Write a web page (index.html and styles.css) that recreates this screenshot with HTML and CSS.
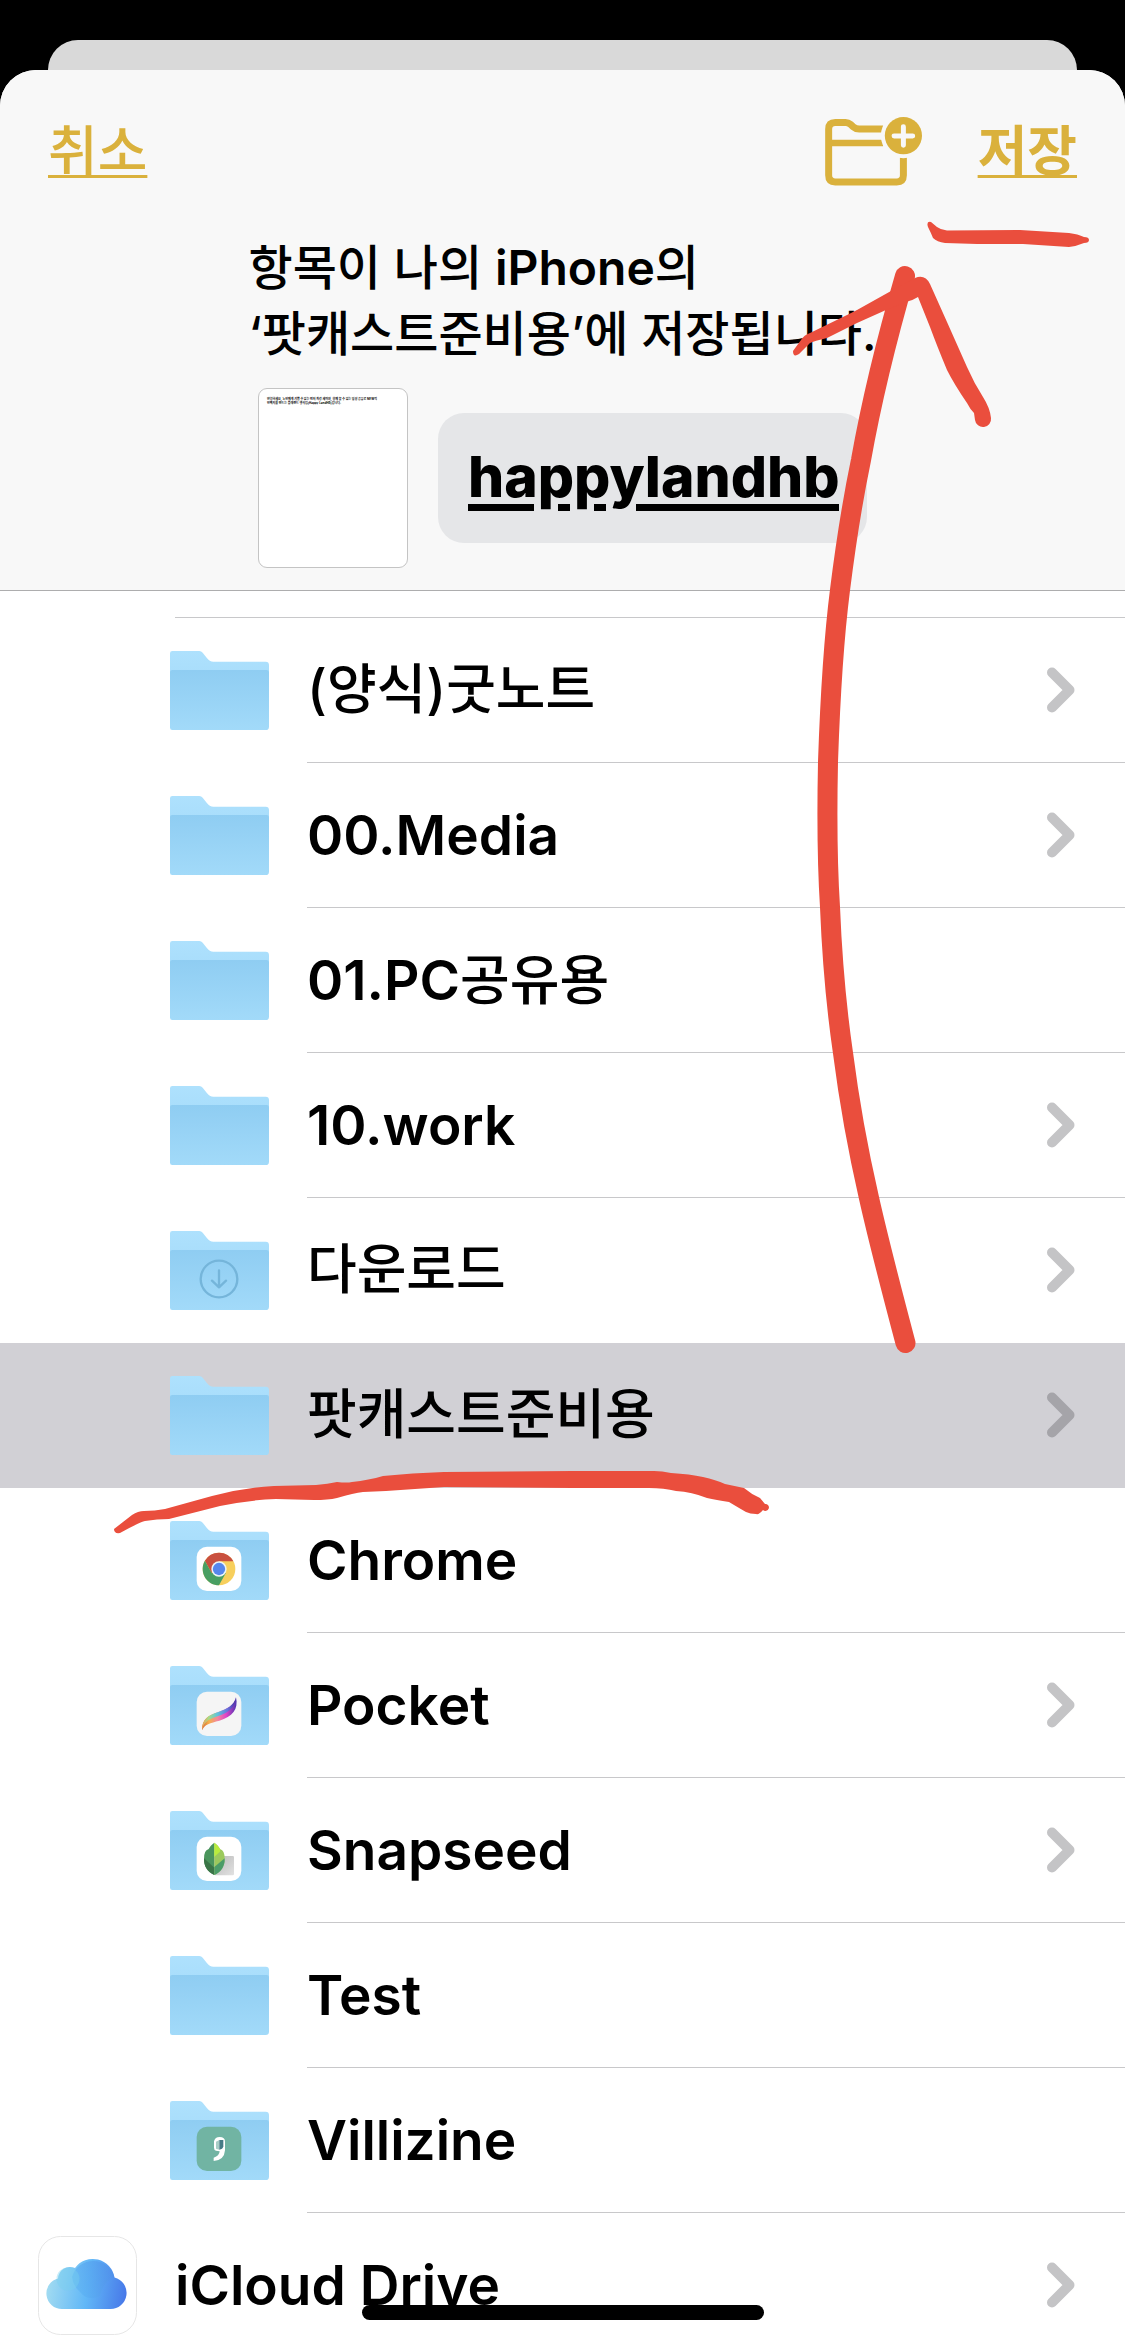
FILE: index.html
```html
<!DOCTYPE html>
<html lang="ko">
<head>
<meta charset="utf-8">
<meta name="viewport" content="width=device-width, initial-scale=1">
<title>파일에 저장</title>
<link rel="stylesheet" href="styles.css">
</head>
<body>
<svg class="defs" aria-hidden="true">
  <defs>
    <linearGradient id="back" x1="0" y1="0" x2="0" y2="1"><stop offset="0" stop-color="#aee1fd"/><stop offset="1" stop-color="#a5dbfa"/></linearGradient>
    <linearGradient id="front" x1="0" y1="0" x2="0" y2="1"><stop offset="0" stop-color="#8fcdf2"/><stop offset="1" stop-color="#a2daf9"/></linearGradient>
    <linearGradient id="feather-low" x1="0" y1="0" x2="1" y2="0"><stop offset="0" stop-color="#d9663a"/><stop offset=".2" stop-color="#f5b04a"/><stop offset=".45" stop-color="#f2879d"/><stop offset=".7" stop-color="#e043c8"/><stop offset="1" stop-color="#4a35b0"/></linearGradient>
    <linearGradient id="feather-high" x1="0" y1="0" x2="1" y2="0"><stop offset="0" stop-color="#f0a050"/><stop offset=".2" stop-color="#a5dc8a"/><stop offset=".45" stop-color="#5fc4dc"/><stop offset=".75" stop-color="#6a72dc"/><stop offset="1" stop-color="#43309e"/></linearGradient>
    <linearGradient id="shade" x1="0" y1="0" x2="1" y2="1"><stop offset="0" stop-color="#b8b8b8"/><stop offset="1" stop-color="#e2e2e2"/></linearGradient>
    <linearGradient id="cloud" gradientUnits="userSpaceOnUse" x1="8" y1="50" x2="90" y2="62"><stop offset="0" stop-color="#a3dcf1"/><stop offset=".5" stop-color="#61b7f7"/><stop offset="1" stop-color="#4675e8"/></linearGradient>
    <linearGradient id="cloud-top" gradientUnits="userSpaceOnUse" x1="34" y1="50" x2="78" y2="34"><stop offset="0" stop-color="#5cb5f4"/><stop offset="1" stop-color="#4f8de8"/></linearGradient>
    <symbol id="folder" viewBox="0 0 297 237">
      <path fill="url(#back)" d="M0 7Q0 0 7 0H88Q94 0 98 5L110 20Q119 32 130 32H287Q297 32 297 42V120H0Z"/>
      <path fill="url(#front)" d="M0 63Q0 57 7 57H290Q297 57 297 64V227Q297 237 287 237H7Q0 237 0 230Z"/>
    </symbol>
    <symbol id="chevron" viewBox="0 0 28 46">
      <path d="M5 5.5L22.500 23L5 40.500" fill="none" stroke="currentColor" stroke-width="10" stroke-linecap="round" stroke-linejoin="round"/>
    </symbol>
  </defs>
</svg>

<div class="screen">
  <div class="rear-sheet"></div>
  <main class="sheet">
    <header class="header">
      <nav class="nav">
        <button class="nav-button" type="button">취소</button>
        <div class="nav-actions">
          <button class="icon-button" type="button" aria-label="새로운 폴더">
            <svg class="new-folder" viewBox="135 169 292 207">
              <path d="M310 205H238Q228 205 220 198L212 191Q205 185 197 185H166Q146 185 146 205V344Q146 364 166 364H351Q371 364 371 344V285" fill="none" stroke="#dab13c" stroke-width="21"/>
              <path d="M150 247H310" stroke="#dab13c" stroke-width="19"/>
              <circle cx="371" cy="225" r="68" fill="#f8f8f8"/>
              <circle cx="371" cy="225" r="56" fill="#dab13c"/>
              <path d="M343 226H399M371 198V254" stroke="#f8f8f8" stroke-width="15" stroke-linecap="round"/>
            </svg>
          </button>
          <button class="nav-button nav-save" type="button">저장</button>
        </div>
      </nav>
      <h1 class="title">항목이 나의 <span class="device">iPhone</span>의<br>‘팟캐스트준비용’에 저장됩니다.</h1>
      <div class="document">
        <div class="thumbnail">
          <p>안녕하세요, 노인에게 기쁨 수 있는 먼저 최강 세미야, 함께 할 수 있는 일상 공유로 NEW적<br>인맥지를 만드는 플레랜드 행사입(Happy LandHB)입니다.</p>
        </div>
        <input class="filename" type="text" value="happylandhb" aria-label="파일 이름" spellcheck="false">
      </div>
    </header>

    <div class="browser">
      <div class="list-edge"></div>
      <ul class="list">
        <li><a class="row" href="#"><svg class="folder"><use href="#folder"/></svg><span class="cell"><span class="name ko">(양식)굿노트</span><svg class="chevron"><use href="#chevron"/></svg></span></a></li>
        <li><a class="row" href="#"><svg class="folder"><use href="#folder"/></svg><span class="cell"><span class="name">00.Media</span><svg class="chevron"><use href="#chevron"/></svg></span></a></li>
        <li><a class="row" href="#"><svg class="folder"><use href="#folder"/></svg><span class="cell"><span class="name">01.PC<span class="ko">공유용</span></span></span></a></li>
        <li><a class="row" href="#"><svg class="folder"><use href="#folder"/></svg><span class="cell"><span class="name">10.work</span><svg class="chevron"><use href="#chevron"/></svg></span></a></li>
        <li><a class="row" href="#"><svg class="folder" viewBox="0 0 297 237"><use href="#folder"/><g fill="none" stroke="#75b5da" stroke-width="7" stroke-linecap="round" stroke-linejoin="round"><circle cx="147" cy="144" r="55"/><path d="M147 118V169M126 149L147 169L168 149"/></g></svg><span class="cell cell-plain"><span class="name ko">다운로드</span><svg class="chevron"><use href="#chevron"/></svg></span></a></li>
        <li><a class="row row-selected" href="#" aria-current="true"><svg class="folder"><use href="#folder"/></svg><span class="cell cell-plain"><span class="name ko">팟캐스트준비용</span><svg class="chevron"><use href="#chevron"/></svg></span></a></li>
        <li><a class="row" href="#"><svg class="folder" viewBox="0 0 297 237"><use href="#folder"/><rect x="80" y="77" width="134" height="133" rx="31" fill="#fff"/>
          <circle cx="147" cy="144" r="49" fill="#f7cf5c"/>
          <path fill="#c9503f" d="M104.600 119.500A49 49 0 0 1 190 121H147L125.500 156.500Z"/>
          <path fill="#489f63" d="M104.600 119.500A49 49 0 0 0 147 193L167.500 156L147 144L125.500 156.500Z"/>
          <circle cx="147" cy="144" r="23" fill="#edf3f5"/><circle cx="147" cy="144" r="18.500" fill="#5686ec"/></svg><span class="cell"><span class="name">Chrome</span></span></a></li>
        <li><a class="row" href="#"><svg class="folder" viewBox="0 0 297 237"><use href="#folder"/><rect x="80" y="77" width="134" height="133" rx="31" fill="#f5f5f5"/>
          <path fill="url(#feather-low)" d="M198 94C193 118 172 129 145 138C114 148 96 160 96 193C103 175 121 171 148 164C187 153 206 130 198 94Z"/>
          <path fill="url(#feather-high)" d="M198 94C193 118 172 129 145 138C114 148 96 160 96 193C102 164 121 158 151 148C178 139 195 123 198 94Z"/></svg><span class="cell"><span class="name">Pocket</span><svg class="chevron"><use href="#chevron"/></svg></span></a></li>
        <li><a class="row" href="#"><svg class="folder" viewBox="0 0 297 237"><use href="#folder"/><rect x="80" y="77" width="134" height="133" rx="31" fill="#fff"/>
          <rect x="133" y="135" width="59" height="58" rx="4" fill="url(#shade)"/>
          <path fill="#4a955d" d="M133 95C125 101 119 107 116 114Q101 118 102 145C102 168 115 183 133 192Z"/>
          <path fill="#3a7547" d="M102 142L133 170V192C112 184 101 166 102 142Z"/>
          <path fill="#9cc95d" d="M133 95C141 101 147 107 150 114Q165 118 164 145C164 168 151 183 133 192Z"/>
          <path fill="#b9ec3e" d="M133 95C141 101 147 107 150 114V122L133 137Z"/>
          <path fill="#4b9c68" d="M164 142L133 168V192C154 184 165 166 164 142Z"/></svg><span class="cell"><span class="name">Snapseed</span><svg class="chevron"><use href="#chevron"/></svg></span></a></li>
        <li><a class="row" href="#"><svg class="folder"><use href="#folder"/></svg><span class="cell"><span class="name">Test</span></span></a></li>
        <li><a class="row" href="#"><svg class="folder" viewBox="0 0 297 237"><use href="#folder"/><rect x="80" y="77" width="134" height="133" rx="31" fill="#71b4a3"/>
          <path fill="#fff" d="M132 121Q135 108 149 108Q165 108 165 122V148Q163 178 131 180V170Q148 165 149 151L138 149Q132 148 132 140Z"/>
          <path fill="#a8cdc6" d="M138 122L148 117V146L138 143Z"/><path fill="#467b86" d="M148 117H160V136Q158 146 148 146Z"/></svg><span class="cell"><span class="name">Villizine</span></span></a></li>
        <li><a class="row row-root" href="#"><svg class="drive" viewBox="0 0 99 99"><rect x=".5" y=".5" width="98" height="98" rx="22" fill="#fff" stroke="#e6e6e6"/>
          <path fill="url(#cloud)" d="M24 73A15.500 15.500 0 0 1 20 42.500A12 12 0 0 1 37 32A22 22 0 0 1 76.500 41.500A16 16 0 0 1 72 73Z"/>
          <path fill="url(#cloud-top)" d="M34 41A22 22 0 0 1 76.500 41.500Q66 44 62 60Q50 66 42 56Q35 50 34 41Z" opacity=".6"/>
          <circle cx="30" cy="43" r="11.500" fill="#79cfee" opacity=".4"/></svg><span class="cell"><span class="name">iCloud Drive</span><svg class="chevron"><use href="#chevron"/></svg></span></a></li>
      </ul>
    </div>
  </main>

  <div class="home-indicator"></div>
  <svg class="ink" viewBox="0 0 1125 2344" aria-hidden="true" fill="#ea4e3d">
    <path d="M928 227Q926 221 931 222L937 227Q941 230 947 230.500L1020 230L1069 233Q1078 234 1084 237Q1089 237 1089 240Q1089 243 1084 243Q1077 246 1069 247L1023 244H977L945 243Q937 242 933 238Q931 233 928 227Z"/>
    <path d="M905.500 1343C888 1277 878 1238 869 1198C858 1150 849 1100 843 1053C836 1005 832 956 830 907C827 860 827 810 828 762C830 703 833 645 840 590C845 550 851 508 861 460Q876 376 905 276" fill="none" stroke="#ea4e3d" stroke-width="20" stroke-linecap="round"/>
    <path d="M793 351L801 340Q804 335 810 333L847 315L857 310L891 291L915 278Q925 274 930 284L947 322L967 367Q974 383 983 397Q990 408 991 418A8 8 0 0 1 975 420L974 413Q970 409 967 403Q954 384 947 370Q937 346 930 327L918 297Q913 300 909 301L886 310L857 323L827 338Q814 341 810 343L799 354Q793 358 793 351Z"/>
    <path d="M114 1529L132 1515Q138 1511 144 1511Q155 1511 165 1509L212 1496Q242 1488 274 1486L316 1485Q328 1484 337 1482Q347 1483 352 1482Q369 1480 383 1476Q412 1473 444 1472L573 1471H654Q662 1471 671 1473Q690 1474 703 1477Q716 1480 725 1484L744 1488Q751 1494 760 1498L765 1504A3.500 3.500 0 1 1 763 1510Q759 1515 756 1514Q750 1514 746 1512Q739 1508 729 1502Q716 1500 707 1498Q692 1492 676 1491Q664 1488 649 1488H573L444 1487L386 1491L363 1492Q354 1493 337 1498Q328 1500 314 1500L276 1499Q249 1500 220 1506L169 1519Q157 1519 145 1521Q140 1522 120 1533Q114 1534 114 1529Z"/>
  </svg>
</div>
</body>
</html>
```
FILE: styles.css
```css
* {
  box-sizing: border-box;
}

body {
  margin: 0;
  background: #000;
  color: #000;
  font-family: Inter, "Noto Sans CJK KR", sans-serif;
}

button,
input {
  margin: 0;
  padding: 0;
  border: 0;
  background: none;
  font: inherit;
}

.defs {
  display: block;
  width: 0;
  height: 0;
}

.screen {
  position: relative;
  display: flex;
  flex-direction: column;
  height: 100vh;
  padding-top: 40px;
  overflow: hidden;
}

.rear-sheet {
  flex: none;
  height: 30px;
  margin: 0 48px;
  border-radius: 30px 30px 0 0;
  background: #d9d9d9;
}

.sheet {
  display: flex;
  flex: 1;
  flex-direction: column;
  min-height: 0;
  overflow: hidden;
  border-radius: 36px 36px 0 0;
  background: #fff;
}

.header {
  display: flex;
  flex: none;
  flex-direction: column;
  align-items: center;
  padding-bottom: 22px;
  border-bottom: 1px solid #adadae;
  background: #f8f8f8;
}

.nav {
  display: flex;
  align-self: stretch;
  align-items: center;
  justify-content: space-between;
  padding: 43px 48px 46px;
}

.nav-actions {
  display: flex;
  align-items: center;
  gap: 56px;
}

.nav-button {
  padding-bottom: 6px;
  color: #dab13c;
  font-family: "Noto Sans CJK KR", sans-serif;
  font-size: 54px;
  font-weight: 500;
  line-height: 70px;
  text-decoration: underline;
  text-decoration-skip-ink: none;
  text-decoration-thickness: 3px;
  text-underline-offset: 4px;
}

.nav-save {
  font-weight: 700;
}

.icon-button {
  color: #dab13c;
}

.new-folder {
  display: block;
  width: 97px;
  height: 69px;
}

.title {
  margin: 0 0 21px;
  font-size: 48px;
  font-weight: 500;
  line-height: 66px;
}

.device {
  font-weight: 600;
}

.document {
  display: flex;
  align-items: center;
  gap: 30px;
}

.thumbnail {
  width: 150px;
  height: 180px;
  padding: 8px;
  overflow: hidden;
  border: 1px solid #c4c4c4;
  border-radius: 9px;
  background: #fff;
}

.thumbnail p {
  margin: 0;
  font-size: 3px;
  font-weight: 700;
  line-height: 4px;
  white-space: nowrap;
}

.filename {
  width: 429px;
  height: 130px;
  padding: 0 28px 4px 30px;
  border-radius: 26px;
  background: #e5e6e8;
  font-size: 57px;
  font-weight: 800;
  text-decoration: underline;
  text-decoration-thickness: 7px;
  text-underline-offset: 7px;
}

.browser {
  flex: 1;
  min-height: 0;
  overflow: hidden;
}

.list-edge {
  height: 27px;
  margin-left: 175px;
  border-bottom: 1px solid #c8c8ca;
}

.list {
  margin: 0;
  padding: 0;
  list-style: none;
}

.row {
  display: flex;
  align-items: center;
  gap: 38px;
  height: 145px;
  padding-left: 170px;
  color: #000;
  text-decoration: none;
}

.row-selected {
  background: #d1d0d5;
}

.row-root {
  padding-left: 38px;
}

.folder {
  flex: none;
  width: 99px;
  height: 79px;
}

.drive {
  flex: none;
  width: 99px;
  height: 99px;
}

.cell {
  display: flex;
  flex: 1;
  align-items: center;
  align-self: stretch;
  justify-content: space-between;
  padding-right: 50px;
  border-bottom: 1px solid #c8c8ca;
}

.cell-plain {
  border-color: transparent;
}

.name {
  font-size: 55px;
  font-weight: 600;
  line-height: 80px;
}

.ko {
  font-size: 54px;
  font-weight: 500;
}

.chevron {
  flex: none;
  width: 28px;
  height: 46px;
  color: #c4c4c6;
}

.row-selected .chevron {
  color: #a5a4a9;
}

.home-indicator {
  position: absolute;
  bottom: 24px;
  left: 50%;
  width: 402px;
  height: 15px;
  margin-left: -201px;
  border-radius: 8px;
  background: #000;
}

.ink {
  position: absolute;
  top: 0;
  left: 0;
  width: 100%;
  height: auto;
  pointer-events: none;
}
```
